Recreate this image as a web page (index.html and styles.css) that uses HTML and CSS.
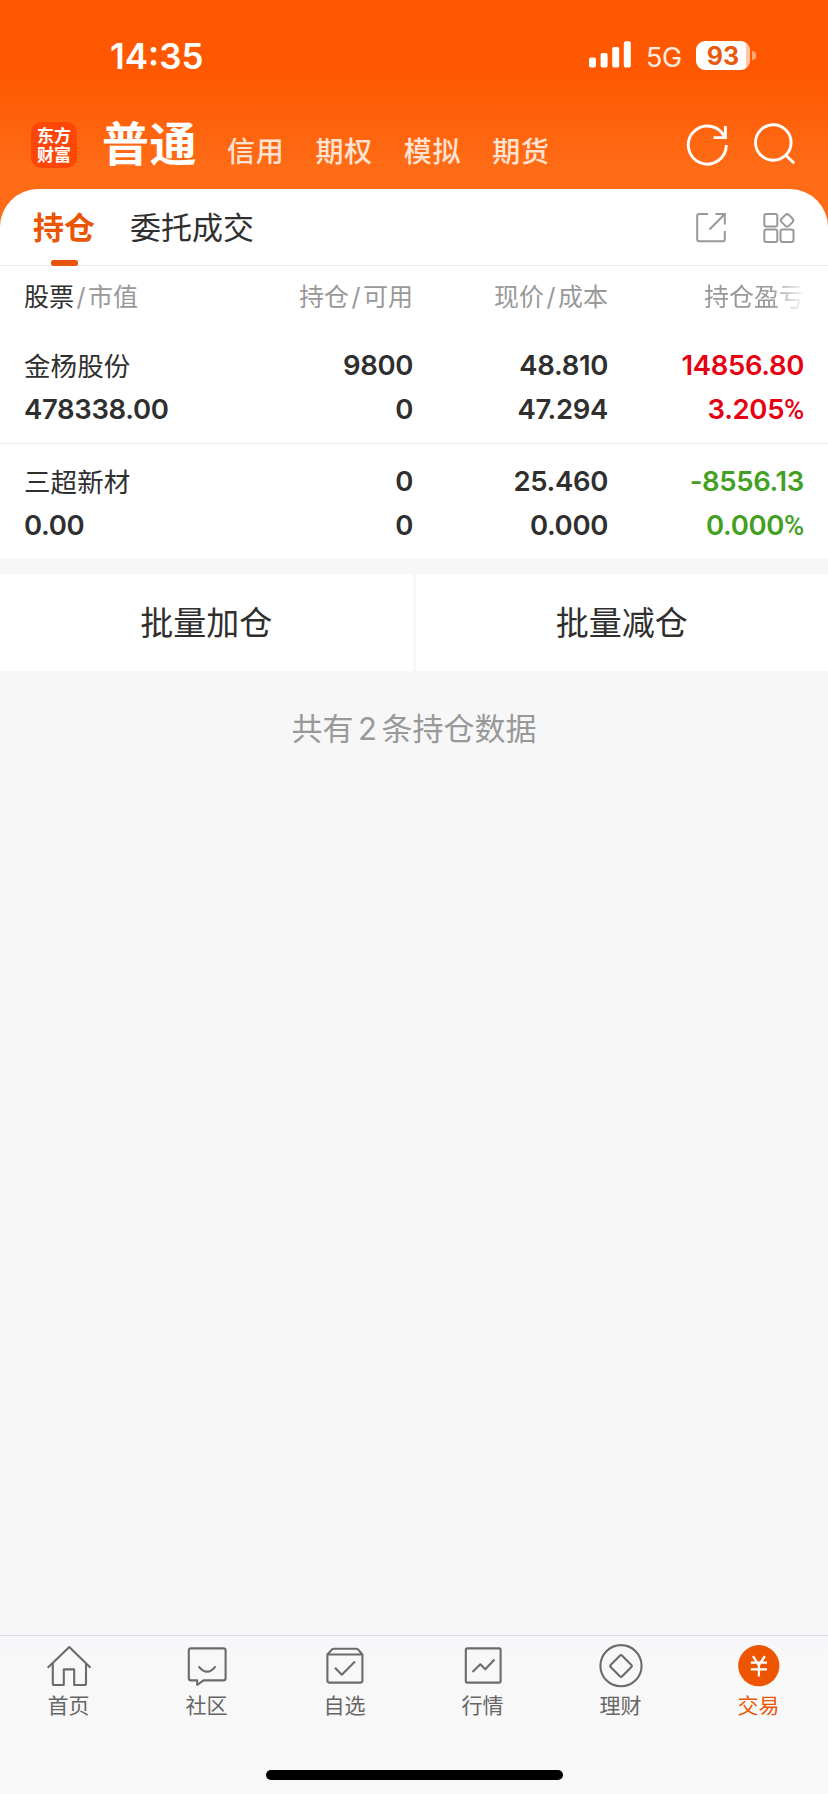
FILE: index.html
```html
<!DOCTYPE html>
<html lang="zh-CN">
<head>
<meta charset="utf-8">
<title>持仓</title>
<link rel="stylesheet" href="styles.css">
</head>
<body>
<div class="app">
  <header class="hero">
    <div class="status">
      <span class="time">14:35</span>
      <div class="status-right">
        <svg class="signal" width="42" height="27" viewBox="0 0 42 27" fill="#fff">
          <rect x="0" y="16.5" width="7" height="10" rx="1.8"/>
          <rect x="11.6" y="12" width="7" height="14.5" rx="1.8"/>
          <rect x="23.2" y="6" width="7" height="20.5" rx="1.8"/>
          <rect x="34.8" y="0.3" width="7" height="26.2" rx="1.8"/>
        </svg>
        <span class="net">5G</span>
        <div class="battery"><span class="level">93</span><span class="nub"></span></div>
      </div>
    </div>
    <div class="accounts">
      <div class="logo">东方<br>财富</div>
      <span class="account-on">普通</span>
      <nav class="account-list"><span>信用</span><span>期权</span><span>模拟</span><span>期货</span></nav>
      <svg class="act" width="44" height="44" viewBox="0 0 44 44" fill="none" stroke="#fff" stroke-width="2.9">
        <path d="M42.300 23A19 19 0 1 1 40.500 15"/><path d="M41.400 4V15.600H29.500"/>
      </svg>
      <svg class="act" width="44" height="44" viewBox="0 0 44 44" fill="none" stroke="#fff" stroke-width="2.9">
        <circle cx="21.300" cy="20.500" r="17.800"/><path d="M33 32.500L42.300 41.300"/>
      </svg>
    </div>
  </header>

  <main class="card">
    <div class="tabs">
      <span class="tab tab-on">持仓</span>
      <span class="tab">委托成交</span>
      <svg class="tool" width="32" height="32" viewBox="0 0 32 32" fill="none" stroke="#999" stroke-width="2">
        <path d="M13 2H4.200Q2.200 2 2.200 4V27.200Q2.200 29.200 4.200 29.200H28Q29.800 29.200 29.800 27.200V19"/>
        <path d="M20.500 2H29.800V12.500M29.500 2.300L14.500 17.500"/>
      </svg>
      <svg class="tool" width="32" height="32" viewBox="0 0 32 32" fill="none" stroke="#999" stroke-width="2">
        <rect x="1.300" y="2" width="13" height="12.500" rx="2"/>
        <rect x="1.300" y="17.500" width="13" height="12.500" rx="2"/>
        <rect x="17.500" y="17.500" width="13" height="12.500" rx="2"/>
        <rect x="19" y="3.300" width="10.200" height="10.200" rx="2.800" transform="rotate(45 24.100 8.400)"/>
      </svg>
    </div>
    <div class="grid head">
      <span><b>股票</b><i>/</i>市值</span>
      <span>持仓<i>/</i>可用</span>
      <span>现价<i>/</i>成本</span>
      <span class="fade">持仓盈亏</span>
    </div>
    <div class="grid row">
      <span class="name">金杨股份</span><span>9800</span><span>48.810</span><span class="up">14856.80</span>
      <span>478338.00</span><span>0</span><span>47.294</span><span class="up">3.205<span class="pct">%</span></span>
    </div>
    <div class="grid row">
      <span class="name">三超新材</span><span>0</span><span>25.460</span><span class="down">-8556.13</span>
      <span>0.00</span><span>0</span><span>0.000</span><span class="down">0.000<span class="pct">%</span></span>
    </div>
  </main>

  <div class="batch"><span>批量加仓</span><span>批量减仓</span></div>
  <p class="summary">共有<span>2</span>条持仓数据</p>

  <footer class="nav">
    <div class="nav-items">
      <div class="item">
        <svg width="48" height="48" viewBox="0 0 48 48"><path d="M2.700 26.700L24.300 6L45.500 26.700M7.800 22.500V42.500Q7.800 44 9.300 44H18.800V28.400H29.200V44H39.500Q41 44 41 42.500V22.500"/></svg>
        <span>首页</span>
      </div>
      <div class="item">
        <svg width="48" height="48" viewBox="0 0 48 48"><path d="M8 7.400H40.400Q42.600 7.400 42.600 9.600V37.200Q42.600 39.400 40.400 39.400H20.500L14.200 44V39.400H8Q5.800 39.400 5.800 37.200V9.600Q5.800 7.400 8 7.400ZM15.700 25.300Q24 36 32.600 25.300"/></svg>
        <span>社区</span>
      </div>
      <div class="item">
        <svg width="48" height="48" viewBox="0 0 48 48"><path d="M6.400 13.500L11 8.400Q11.700 7.700 12.700 7.700H35.300Q36.300 7.700 37 8.400L41.400 13.500V39.500Q41.400 41.600 39.300 41.600H8.500Q6.400 41.600 6.400 39.500ZM6.400 13.500H41.400M14 26.700L20.800 33.700L34 20.500"/></svg>
        <span>自选</span>
      </div>
      <div class="item">
        <svg width="48" height="48" viewBox="0 0 48 48"><rect x="6.800" y="7.400" width="34.800" height="34.200" rx="1.500"/><path d="M13.500 31L21.300 23.300L26.300 28.300L35.500 18.500"/></svg>
        <span>行情</span>
      </div>
      <div class="item">
        <svg width="48" height="48" viewBox="0 0 48 48"><circle cx="24" cy="24.700" r="20.600"/><path d="M22.800 14.800Q24 13.600 25.200 14.800L34.200 23.800Q35.400 25 34.200 26.200L25.200 35.200Q24 36.400 22.800 35.200L13.800 26.200Q12.600 25 13.800 23.800Z"/></svg>
        <span>理财</span>
      </div>
      <div class="item item-on">
        <svg width="48" height="48" viewBox="0 0 48 48"><circle class="coin" cx="23.800" cy="24.700" r="20.600"/><path class="yen" d="M18 15.200L23.900 24.400L29.800 15.200M15.800 21.700H32M15.800 28.300H32M23.900 24V35.500"/></svg>
        <span>交易</span>
      </div>
    </div>
    <div class="home-bar"></div>
  </footer>
</div>
</body>
</html>
```
FILE: styles.css
```css
* { box-sizing: border-box; }
body {
  margin: 0;
  background: #f7f7f7;
  color: #2f2f2f;
  font-family: Inter, "Noto Sans CJK SC", sans-serif;
}
.app {
  width: 828px;
  height: 1794px;
  display: flex;
  flex-direction: column;
  overflow: hidden;
}

/* orange header */
.hero {
  height: 237px;
  margin-bottom: -48px;
  flex: none;
  background: linear-gradient(#ff5800 0, #ff5800 75px, #ff6c17 170px, #ff6c17 100%);
  color: #fff;
}
.status {
  height: 112px;
  padding: 0 72px 0 110px;
  display: flex;
  justify-content: space-between;
}
.time { font-size: 35px; font-weight: 570; line-height: 42px; padding-top: 35px; letter-spacing: 0; }
.status-right { display: flex; align-items: flex-start; }
.signal { margin: 41px 15px 0 0; }
.net { width: 50px; font-size: 27px; line-height: 32px; padding-top: 42px; color: #ffece0; letter-spacing: -0.500px; }
.battery { display: flex; align-items: center; gap: 2px; margin-top: 41px; }
.level {
  width: 54px;
  height: 29px;
  border-radius: 9px;
  background: linear-gradient(90deg, #fff 50px, #ffc6a6 50px);
  color: #e9590c;
  font-size: 25px;
  font-weight: 700;
  line-height: 30px;
  text-align: center;
}
.nub { width: 4px; height: 9px; border-radius: 0 5px 5px 0; background: #ffa675; }
.accounts { height: 77px; display: flex; padding-left: 31px; }
.logo {
  width: 46px;
  height: 46px;
  margin-top: 10px;
  padding-top: 3px;
  border-radius: 10px;
  background: #ff4609;
  text-align: center;
  font: 700 17px/19px "Noto Sans CJK SC", sans-serif;
}
.account-on { margin: 2px 0 0 25px; font-size: 47px; font-weight: 700; line-height: 60px; letter-spacing: 0.500px; }
.account-list {
  display: flex;
  gap: 31px;
  margin: 20px 0 0 30px;
  font-size: 28px;
  font-weight: 500;
  line-height: 40px;
  letter-spacing: 0.700px;
  color: #ffe3d2;
}
.act { margin-top: 10px; }
.act:nth-of-type(1) { margin-left: auto; }
.act:nth-of-type(2) { margin-left: 24px; margin-right: 32px; }

/* holdings card */
.card { background: #fff; border-radius: 38px 38px 0 0; flex: none; height: 369px; }
.tabs {
  height: 77px;
  border-bottom: 1px solid #eee;
  display: flex;
  align-items: flex-start;
  padding: 0 33px;
}
.tab { font-size: 31px; line-height: 77px; margin-right: 35px; }
.tab-on { position: relative; color: #ea5504; font-weight: 700; }
.tab-on::after {
  content: "";
  position: absolute;
  left: 18px;
  top: 71px;
  width: 27px;
  height: 6px;
  border-radius: 2.500px;
  background: #e8560b;
}
.tool { margin-top: 23px; }
.tool:nth-of-type(1) { margin-left: auto; margin-right: 36px; }
.grid {
  display: grid;
  grid-template-columns: 192px 197px 195px 196px;
  padding: 0 24px;
  text-align: right;
  white-space: nowrap;
}
.grid > :nth-child(4n + 1) { text-align: left; }
.head { height: 62px; line-height: 62px; font-size: 25px; color: #999; }
.head b { font-weight: 400; color: #2f2f2f; }
.head i { display: inline-block; width: 14px; text-align: center; font-style: normal; }
.fade { -webkit-mask-image: linear-gradient(90deg, #000 163px, transparent 198px); mask-image: linear-gradient(90deg, #000 163px, transparent 198px); }
.row {
  height: 115px;
  padding-top: 16px;
  grid-auto-rows: 43.500px;
  line-height: 43px;
  font-size: 27.500px;
  font-weight: 570;
  letter-spacing: -0.350px;
}
.row + .row { border-top: 1px solid #eee; }
.pct { font-family: Roboto, sans-serif; font-weight: 500; }
.name { font-size: 26.500px; font-weight: 400; letter-spacing: 0.100px; line-height: 44px; }
.up { color: #e60012; }
.down { color: #44a023; }

/* batch actions */
.batch { display: grid; grid-template-columns: 1fr 1fr; gap: 3px; margin-top: 16px; flex: none; }
.batch span {
  height: 97px;
  background: #fff;
  text-align: center;
  font-size: 33px;
  line-height: 98px;
}
.summary { margin: 34px 0 0; text-align: center; font-size: 31px; line-height: 48px; color: #999; }
.summary span { display: inline-block; width: 28px; }

/* bottom navigation */
.nav { margin-top: auto; height: 159px; flex: none; border-top: 1px solid #dfdfe2; background: linear-gradient(#f7f7fb, #f8f8f8 24px); }
.nav-items { display: grid; grid-template-columns: repeat(6, 1fr); padding-top: 5px; height: 134px; }
.item { display: flex; flex-direction: column; align-items: center; font-size: 21px; line-height: 30px; color: #666; }
.item svg { fill: none; stroke: #6b6b6b; stroke-width: 2.100; stroke-linejoin: round; }
.item span { margin: 2px 1px 0 0; }
.item-on { color: #ea5504; }
.item .coin { fill: #ee5500; stroke: none; }
.item .yen { stroke: #fff; stroke-width: 2.300; }
.home-bar { width: 297px; height: 10px; margin: 0 auto; border-radius: 5px; background: #000; }
```
